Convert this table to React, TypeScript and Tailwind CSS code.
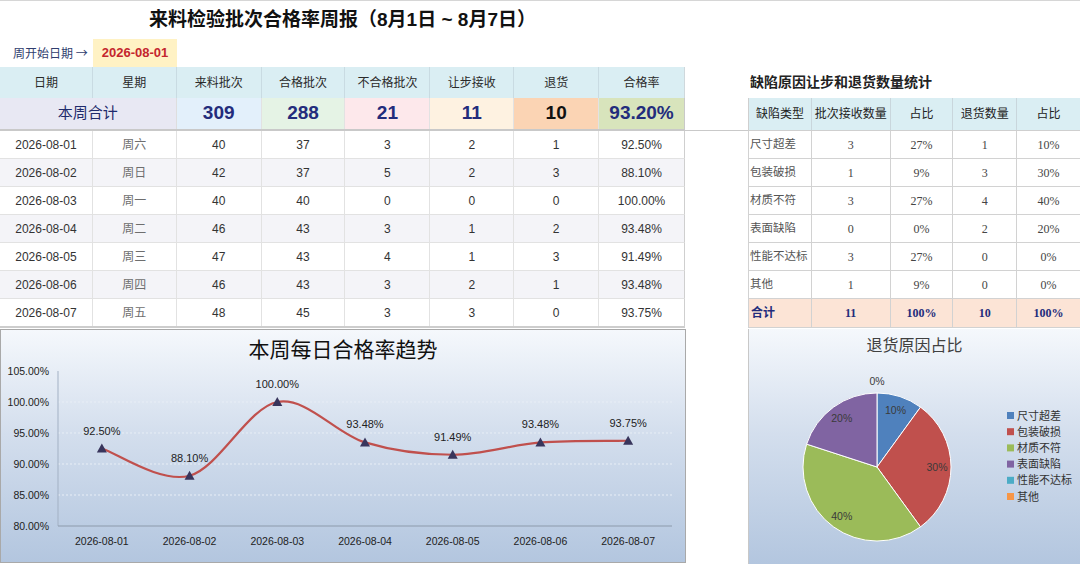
import React from 'react';

const days = [
  { date: '2026-08-01', wd: '周六', inc: 40, ok: 37, ng: 3, con: 2, ret: 1, rate: '92.50%' },
  { date: '2026-08-02', wd: '周日', inc: 42, ok: 37, ng: 5, con: 2, ret: 3, rate: '88.10%' },
  { date: '2026-08-03', wd: '周一', inc: 40, ok: 40, ng: 0, con: 0, ret: 0, rate: '100.00%' },
  { date: '2026-08-04', wd: '周二', inc: 46, ok: 43, ng: 3, con: 1, ret: 2, rate: '93.48%' },
  { date: '2026-08-05', wd: '周三', inc: 47, ok: 43, ng: 4, con: 1, ret: 3, rate: '91.49%' },
  { date: '2026-08-06', wd: '周四', inc: 46, ok: 43, ng: 3, con: 2, ret: 1, rate: '93.48%' },
  { date: '2026-08-07', wd: '周五', inc: 48, ok: 45, ng: 3, con: 3, ret: 0, rate: '93.75%' },
];

const defects = [
  { name: '尺寸超差', con: 3, conPct: '27%', ret: 1, retPct: '10%' },
  { name: '包装破损', con: 1, conPct: '9%', ret: 3, retPct: '30%' },
  { name: '材质不符', con: 3, conPct: '27%', ret: 4, retPct: '40%' },
  { name: '表面缺陷', con: 0, conPct: '0%', ret: 2, retPct: '20%' },
  { name: '性能不达标', con: 3, conPct: '27%', ret: 0, retPct: '0%' },
  { name: '其他', con: 1, conPct: '9%', ret: 0, retPct: '0%' },
];

const W = ['w-[93px]', 'w-[84px]', 'w-[85px]', 'w-[84px]', 'w-[85px]', 'w-[84px]', 'w-[85px]', 'w-[85px]'];
const RW = ['w-[63px]', 'w-[79px]', 'w-[63px]', 'w-[64px]', 'w-[63px]'];

const sans = "font-['Liberation_Sans','Noto_Sans_CJK_SC',sans-serif]";
const serif = "font-['Liberation_Serif','Noto_Sans_CJK_SC',serif]";

const LineChart = () => {
  const rates = [92.5, 88.1, 100, 93.48, 91.49, 93.48, 93.75];
  const labels = ['92.50%', '88.10%', '100.00%', '93.48%', '91.49%', '93.48%', '93.75%'];
  const step = 614 / 7;
  const pts = rates.map((v, i) => ({ x: 57 + step * (i + 0.5), y: 157 - (v - 80) * 6.2 }));
  let d = `M${pts[0].x},${pts[0].y}`;
  for (let i = 0; i < pts.length - 1; i++) {
    const p0 = pts[i - 1] ?? pts[i];
    const p1 = pts[i];
    const p2 = pts[i + 1];
    const p3 = pts[i + 2] ?? p2;
    d += ` C${p1.x + (p2.x - p0.x) / 6},${p1.y + (p2.y - p0.y) / 6} ${p2.x - (p3.x - p1.x) / 6},${p2.y - (p3.y - p1.y) / 6} ${p2.x},${p2.y}`;
  }
  const ticks = ['105.00%', '100.00%', '95.00%', '90.00%', '85.00%', '80.00%'];

  return (
    <svg width={684} height={192} className="block overflow-visible font-['Liberation_Sans',sans-serif]">
      {ticks.map((t, k) => (
        <g key={t}>
          {k < 5 && <line x1={57} x2={671} y1={2 + 31 * k} y2={2 + 31 * k} stroke="#e8eef6" strokeDasharray="2 2" />}
          <text x={48} y={2 + 31 * k + 4} fontSize={10.5} textAnchor="end" fill="#222">{t}</text>
        </g>
      ))}
      <line x1={57} x2={57} y1={2} y2={157} stroke="#a3b1c4" />
      <line x1={57} x2={671} y1={157} y2={157} stroke="#8d9aab" />
      <path d={d} fill="none" stroke="#c0504d" strokeWidth={2.2} />
      {pts.map((p, i) => (
        <g key={i}>
          <polygon points={`${p.x},${p.y - 5} ${p.x - 5},${p.y + 4} ${p.x + 5},${p.y + 4}`} fill="#38355c" />
          <text x={p.x} y={p.y - 14} fontSize={11} textAnchor="middle" fill="#222">{labels[i]}</text>
          <text x={p.x} y={176} fontSize={10.5} textAnchor="middle" fill="#222">{days[i].date}</text>
        </g>
      ))}
    </svg>
  );
};

const PieChart = () => {
  const cx = 128;
  const cy = 104;
  const r = 74;
  const slices = [
    { v: 10, c: '#4f81bd' },
    { v: 30, c: '#c0504d' },
    { v: 40, c: '#9bbb59' },
    { v: 20, c: '#8064a2' },
  ];
  const legend = [
    { n: '尺寸超差', c: '#4f81bd' },
    { n: '包装破损', c: '#c0504d' },
    { n: '材质不符', c: '#9bbb59' },
    { n: '表面缺陷', c: '#8064a2' },
    { n: '性能不达标', c: '#4bacc6' },
    { n: '其他', c: '#f79646' },
  ];
  let acc = 0;
  const pos = (a: number, rr: number) => ({ x: cx + rr * Math.sin(a), y: cy - rr * Math.cos(a) });

  return (
    <svg width={330} height={200} className="block font-['Liberation_Sans','Noto_Sans_CJK_SC',sans-serif]">
      {slices.map((s) => {
        const a1 = (acc / 100) * Math.PI * 2;
        acc += s.v;
        const a2 = (acc / 100) * Math.PI * 2;
        const p1 = pos(a1, r);
        const p2 = pos(a2, r);
        const m = pos((a1 + a2) / 2, 60);
        return (
          <g key={s.c}>
            <path
              d={`M${cx},${cy} L${p1.x},${p1.y} A${r},${r} 0 ${s.v > 50 ? 1 : 0} 1 ${p2.x},${p2.y} Z`}
              fill={s.c}
              stroke="#ffffff"
              strokeWidth={1}
            />
            <text x={m.x} y={m.y + 4} fontSize={10.5} textAnchor="middle" fill="#3a3a3a">{s.v}%</text>
          </g>
        );
      })}
      <text x={cx} y={22} fontSize={10.5} textAnchor="middle" fill="#3a3a3a">0%</text>
      {legend.map((l, i) => (
        <g key={l.n}>
          <rect x={258} y={49 + i * 16.2} width={7} height={7} fill={l.c} />
          <text x={268} y={56.5 + i * 16.2} fontSize={11} fill="#333">{l.n}</text>
        </g>
      ))}
    </svg>
  );
};

export default function App() {
  const sum = [
    { v: '309', bg: 'bg-[#e3f0fb]', c: 'text-[#232c7c]' },
    { v: '288', bg: 'bg-[#e5f3e5]', c: 'text-[#232c7c]' },
    { v: '21', bg: 'bg-[#fde8eb]', c: 'text-[#232c7c]' },
    { v: '11', bg: 'bg-[#fef2e1]', c: 'text-[#232c7c]' },
    { v: '10', bg: 'bg-[#fbd4b4]', c: 'text-[#111111]' },
    { v: '93.20%', bg: 'bg-[#d8e4bc]', c: 'text-[#232c7c]' },
  ];
  const heads = ['日期', '星期', '来料批次', '合格批次', '不合格批次', '让步接收', '退货', '合格率'];
  const rheads = ['缺陷类型', '批次接收数量', '占比', '退货数量', '占比'];

  return (
    <div className={`h-[564px] w-[1080px] overflow-hidden border-t border-[#d6d6d6] bg-white ${sans}`}>
      {/* title */}
      <div className="flex h-[38px] w-[685px] items-center justify-center text-[19px] font-bold text-[#111]">
        来料检验批次合格率周报（8月1日 ~ 8月7日）
      </div>

      {/* start date */}
      <div className="flex h-[28px]">
        <div className="flex w-[93px] items-center whitespace-nowrap pl-[13px] font-['Noto_Sans_CJK_SC',sans-serif] text-[12px] text-[#2f3d6e]">周开始日期 →</div>
        <div className="flex w-[84px] items-center justify-center bg-[#fff2c4] text-[13px] font-bold text-[#c4262e]">2026-08-01</div>
      </div>

      {/* header row / right title */}
      <div className="flex h-[31px]">
        <div className="flex w-[685px] border-r border-[#cfd8dc] bg-[#daeef3]">
          {heads.map((h, i) => (
            <div key={h} className={`${W[i]} flex items-center justify-center border-r border-[#c9dbe2] text-[12px] text-[#2a2a2a] last:border-r-0`}>
              {h}
            </div>
          ))}
        </div>
        <div className="w-[63px]" />
        <div className="flex items-center pl-[2px] text-[14px] font-bold text-[#222]">缺陷原因让步和退货数量统计</div>
      </div>

      {/* summary / right header */}
      <div className="flex h-[33px]">
        <div className="flex w-[685px] border-r border-b-2 border-[#c9c9c9]">
          <div className="flex w-[177px] items-center justify-center border-r border-[#dedede] bg-[#e8e8f3] text-[15px] text-[#1f2b6c]">本周合计</div>
          {sum.map((s, i) => (
            <div key={i} className={`${W[i + 2]} ${s.bg} ${s.c} flex items-center justify-center border-r border-[#e2e2e2] text-[19px] font-bold last:border-r-0`}>
              {s.v}
            </div>
          ))}
        </div>
        <div className="w-[63px] border-b border-[#c9c9c9]" />
        <div className="flex w-[332px] border-b border-l border-[#cfcfcf] bg-[#daeef3]">
          {rheads.map((h, i) => (
            <div key={i} className={`${RW[i]} flex items-center justify-center whitespace-nowrap border-r border-[#c9d6dc] text-[12px] text-[#222] last:border-r-0`}>
              {h}
            </div>
          ))}
        </div>
      </div>

      {/* data rows */}
      {days.map((d, r) => {
        const def = defects[r];
        const last = r === days.length - 1;
        return (
          <div key={d.date} className={`flex ${last ? 'h-[29px]' : 'h-[28px]'}`}>
            <div className={`flex w-[685px] border-r border-[#cfcfcf] ${last ? 'border-b-2 border-b-[#cdcdcd]' : 'border-b border-b-[#e2e2e2]'} ${r % 2 ? 'bg-[#f4f4f8]' : 'bg-white'} text-[12px] text-[#333]`}>
              <div className={`${W[0]} flex items-center justify-center border-r border-[#e2e2e2]`}>{d.date}</div>
              <div className={`${W[1]} flex items-center justify-center border-r border-[#e2e2e2] text-[#6e6e6e]`}>{d.wd}</div>
              <div className={`${W[2]} flex items-center justify-center border-r border-[#e2e2e2]`}>{d.inc}</div>
              <div className={`${W[3]} flex items-center justify-center border-r border-[#e2e2e2]`}>{d.ok}</div>
              <div className={`${W[4]} flex items-center justify-center border-r border-[#e2e2e2]`}>{d.ng}</div>
              <div className={`${W[5]} flex items-center justify-center border-r border-[#e2e2e2]`}>{d.con}</div>
              <div className={`${W[6]} flex items-center justify-center border-r border-[#e2e2e2]`}>{d.ret}</div>
              <div className={`${W[7]} flex items-center justify-center`}>{d.rate}</div>
            </div>
            <div className="w-[63px]" />
            {def ? (
              <div className={`flex w-[332px] border-b border-l border-[#d2d2d2] bg-white text-[12px] text-[#454545] ${serif}`}>
                <div className={`${RW[0]} flex items-center overflow-hidden whitespace-nowrap border-r border-[#d2d2d2] pl-[1px] text-[11.5px] text-[#555]`}>{def.name}</div>
                <div className={`${RW[1]} flex items-center justify-center border-r border-[#d2d2d2]`}>{def.con}</div>
                <div className={`${RW[2]} flex items-center justify-center border-r border-[#d2d2d2]`}>{def.conPct}</div>
                <div className={`${RW[3]} flex items-center justify-center border-r border-[#d2d2d2]`}>{def.ret}</div>
                <div className={`${RW[4]} flex items-center justify-center`}>{def.retPct}</div>
              </div>
            ) : (
              <div className={`flex w-[332px] border-b border-l border-[#d2d2d2] bg-[#fce4d6] text-[12px] font-bold text-[#232c7c] ${serif}`}>
                <div className={`${RW[0]} flex items-center border-r border-[#d2d2d2] pl-[2px]`}>合计</div>
                <div className={`${RW[1]} flex items-center justify-center border-r border-[#d2d2d2]`}>11</div>
                <div className={`${RW[2]} flex items-center justify-center border-r border-[#d2d2d2]`}>100%</div>
                <div className={`${RW[3]} flex items-center justify-center border-r border-[#d2d2d2]`}>10</div>
                <div className={`${RW[4]} flex items-center justify-center`}>100%</div>
              </div>
            )}
          </div>
        );
      })}

      {/* charts */}
      <div className="flex h-[236px] pt-[1px]">
        <div className="h-[234px] w-[686px] border border-[#a9a9a9] bg-linear-to-b from-[#f5f8fc] via-[#d3deed] via-45% to-[#b3c6df]">
          <div className="flex h-[39px] items-center justify-center text-[21px] text-[#111]">本周每日合格率趋势</div>
          <LineChart />
        </div>
        <div className="w-[62px]" />
        <div className="h-[235px] w-[332px] border-l border-[#c8c8c8] bg-linear-to-b from-[#f5f8fc] via-[#d3deed] via-45% to-[#b3c6df]">
          <div className="flex h-[34px] items-center justify-center text-[16px] text-[#404040]">退货原因占比</div>
          <PieChart />
        </div>
      </div>
    </div>
  );
}
